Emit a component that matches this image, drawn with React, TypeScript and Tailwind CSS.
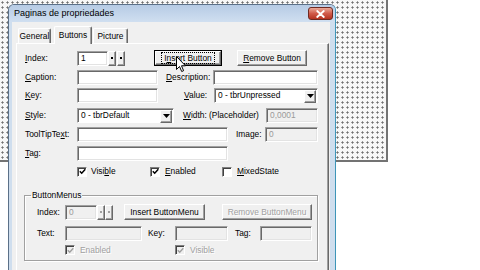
import React from "react";

type Kids = { children?: React.ReactNode };

const DIS = "text-[#a0a0a0] [text-shadow:1px_1px_0_#ffffff]";

function U({ children }: Kids) {
  return <span className="underline underline-offset-[1px] decoration-[0.8px]">{children}</span>;
}

function Label({ w, children, className = "" }: Kids & { w: string; className?: string }) {
  return <div className={`${w} shrink-0 whitespace-nowrap ${className}`}>{children}</div>;
}

function Field({ w, children, gray, dim }: Kids & { w: string; gray?: boolean; dim?: boolean }) {
  return (
    <div
      className={`${w} h-[15px] shrink-0 flex items-center pl-[3px] border border-t-[#a0a0a0] border-l-[#a0a0a0] border-b-white border-r-white shadow-[inset_1px_1px_0_#696969,inset_-1px_-1px_0_#e3e3e3] ${
        gray ? "bg-[#f0f0f0]" : "bg-white"
      } ${dim ? "text-[#9a9a9a]" : "text-black"}`}
    >
      {children}
    </div>
  );
}

function Select({ w, children }: Kids & { w: string }) {
  return (
    <div className={`${w} h-[15px] shrink-0 flex items-center border border-t-[#a0a0a0] border-l-[#a0a0a0] border-b-white border-r-white shadow-[inset_1px_1px_0_#696969] bg-white`}>
      <div className="flex-1 pl-[3px] whitespace-nowrap">{children}</div>
      <div className="w-[12px] h-[13px] mr-[1px] mt-[1px] flex items-center justify-center bg-[#f0f0f0] border border-t-white border-l-white border-b-[#696969] border-r-[#696969] shadow-[inset_-1px_-1px_0_#a0a0a0]">
        <svg width="7" height="4" viewBox="0 0 7 4">
          <path d="M0 0 H7 L3.5 4 Z" fill="#000" />
        </svg>
      </div>
    </div>
  );
}

function Btn({ w, children, focus, disabled }: Kids & { w: string; focus?: boolean; disabled?: boolean }) {
  return (
    <div className={`${w} h-[16px] shrink-0 bg-[#f0f0f0] ${focus ? "border border-black" : ""}`}>
      <div
        className={`w-full h-full flex items-center justify-center whitespace-nowrap border border-t-white border-l-white border-b-[#696969] border-r-[#696969] shadow-[inset_-1px_-1px_0_#a0a0a0] ${
          disabled ? DIS : ""
        }`}
      >
        {focus ? <span className="outline outline-1 outline-dotted outline-black px-[2px] py-[1px]">{children}</span> : children}
      </div>
    </div>
  );
}

function Spin({ dim }: { dim?: boolean }) {
  const c = dim ? "#a0a0a0" : "#000";
  return (
    <div className="w-[8px] h-[15px] shrink-0 flex items-center justify-center bg-[#f0f0f0] border border-t-white border-l-white border-b-[#696969] border-r-[#696969] shadow-[inset_-1px_-1px_0_#a0a0a0]">
      <div className="w-[2px] h-[2px]" style={{ background: c }} />
    </div>
  );
}

function Check({ checked, disabled }: { checked?: boolean; disabled?: boolean }) {
  return (
    <div
      className={`w-[10px] h-[10px] shrink-0 flex items-center justify-center border border-t-[#808080] border-l-[#808080] border-b-white border-r-white shadow-[inset_1px_1px_0_#404040] ${
        disabled ? "bg-[#f0f0f0]" : "bg-white"
      }`}
    >
      {checked && (
        <svg width="7" height="7" viewBox="0 0 7 7">
          <path d="M0.8 3.2 L2.7 5.2 L6.3 1.2" stroke={disabled ? "#a0a0a0" : "#000"} strokeWidth="1.5" fill="none" />
        </svg>
      )}
    </div>
  );
}

function Tab({ w, children, className = "" }: Kids & { w: string; className?: string }) {
  return (
    <div
      className={`${w} h-[15px] shrink-0 flex items-center justify-center bg-[#f0f0f0] border-t border-l border-r border-t-white border-l-white border-r-[#696969] rounded-t-[2px] shadow-[inset_-1px_0_0_#a0a0a0] ${className}`}
    >
      {children}
    </div>
  );
}

function Dialog() {
  return (
    <div className="absolute left-[8px] top-[4px] w-[328px] h-[290px] flex flex-col rounded-t-[6px] border border-[#5b7088] border-r-[#3d95b8] bg-[#cfdeee]">
      <div className="h-[17px] shrink-0 flex items-center justify-between pl-[5px] pr-[2px] rounded-t-[5px] bg-linear-to-b from-[#b6cbe5] to-[#d0dff0]">
        <span className="text-[9px] text-black">Paginas de propriedades</span>
        <div className="w-[25px] h-[13px] rounded-[3px] border border-[#6e2a22] bg-linear-to-b from-[#e9a898] via-[#d05a4a] to-[#b5321f] flex items-center justify-center">
          <svg width="9" height="8" viewBox="0 0 9 8">
            <path d="M1.2 1 L7.8 7 M7.8 1 L1.2 7" stroke="#fff" strokeWidth="1.8" strokeLinecap="round" />
          </svg>
        </div>
      </div>
      <div className="ml-[3px] mr-[5px] flex-1 bg-[#f0f0f0] pt-[4px] pl-[4px]">
        <div className="relative z-10 flex items-end h-[17px] pl-[2px]">
          <Tab w="w-[33px]">General</Tab>
          <div className="ml-[3px] w-[38px] h-[18px] -mb-[1px] shrink-0 flex items-center justify-center bg-[#f0f0f0] border-t border-l border-r border-t-white border-l-white border-r-[#696969] rounded-t-[2px] shadow-[inset_-1px_0_0_#a0a0a0]">
            Buttons
          </div>
          <Tab w="w-[35px]" className="ml-[1px]">
            Picture
          </Tab>
        </div>
        <div className="w-[313px] h-[260px] border border-t-white border-l-white border-b-[#696969] border-r-[#696969] shadow-[inset_-1px_-1px_0_#a0a0a0] pl-[8px] pt-[6px]">
          {/* Index row */}
          <div className="flex items-center h-[16px]">
            <Label w="w-[52px]">
              <U>I</U>ndex:
            </Label>
            <Field w="w-[31px]">1</Field>
            <Spin />
            <div className="ml-[1px]">
              <Spin />
            </div>
            <div className="ml-[29px]">
              <Btn w="w-[68px]" focus>
                I<U>n</U>sert Button
              </Btn>
            </div>
            <div className="ml-[15px]">
              <Btn w="w-[70px]">
                <U>R</U>emove Button
              </Btn>
            </div>
          </div>
          {/* Caption */}
          <div className="flex items-center h-[15px] mt-[4px]">
            <Label w="w-[52px]">
              <U>C</U>aption:
            </Label>
            <Field w="w-[81px]" />
            <Label w="w-[47px]" className="ml-[8px]">
              <U>D</U>escription:
            </Label>
            <Field w="w-[105px]" />
          </div>
          {/* Key */}
          <div className="flex items-center h-[15px] mt-[3px]">
            <Label w="w-[52px]">
              <U>K</U>ey:
            </Label>
            <Field w="w-[81px]" />
            <Label w="w-[30px]" className="ml-[26px]">
              <U>V</U>alue:
            </Label>
            <Select w="w-[104px]">0 - tbrUnpressed</Select>
          </div>
          {/* Style */}
          <div className="flex items-center h-[15px] mt-[5px]">
            <Label w="w-[52px]">
              <U>S</U>tyle:
            </Label>
            <Select w="w-[97px]">0 - tbrDefault</Select>
            <Label w="w-[83px]" className="ml-[9px]">
              <U>W</U>idth: (Placeholder)
            </Label>
            <Field w="w-[52px]" gray dim>
              0,0001
            </Field>
          </div>
          {/* ToolTipText */}
          <div className="flex items-center h-[15px] mt-[4px]">
            <Label w="w-[52px]">
              ToolTipTe<U>x</U>t:
            </Label>
            <Field w="w-[151px]" />
            <Label w="w-[29px]" className="ml-[8px]">
              Image:
            </Label>
            <Field w="w-[53px]" gray dim>
              0
            </Field>
          </div>
          {/* Tag */}
          <div className="flex items-center h-[15px] mt-[4px]">
            <Label w="w-[52px]">
              <U>T</U>ag:
            </Label>
            <Field w="w-[151px]" />
          </div>
          {/* checkboxes */}
          <div className="flex items-center h-[11px] mt-[5px]">
            <div className="w-[52px] shrink-0" />
            <div className="w-[73px] shrink-0 flex items-center">
              <Check checked />
              <span className="ml-[4px]">
                Visi<U>b</U>le
              </span>
            </div>
            <div className="w-[72px] shrink-0 flex items-center">
              <Check checked />
              <span className="ml-[5px]">
                <U>E</U>nabled
              </span>
            </div>
            <div className="flex items-center">
              <Check />
              <span className="ml-[5px]">
                <U>M</U>ixedState
              </span>
            </div>
          </div>
          {/* ButtonMenus group */}
          <fieldset className="mt-[13px] -ml-[1px] w-[294px] border border-[#a0a0a0] shadow-[inset_1px_1px_0_#ffffff,1px_1px_0_#ffffff]">
            <legend className="ml-[6px] px-[1px] h-[10px] leading-[10px]">ButtonMenus</legend>
            <div className="pl-[12px] pt-[4px] pb-[5px]">
              <div className="flex items-center h-[16px]">
                <Label w="w-[28px]">Index:</Label>
                <Field w="w-[32px]" gray dim>
                  0
                </Field>
                <Spin dim />
                <Spin dim />
                <div className="ml-[11px]">
                  <Btn w="w-[81px]">Insert ButtonMenu</Btn>
                </div>
                <div className="ml-[17px]">
                  <Btn w="w-[90px]" disabled>
                    Remove ButtonMenu
                  </Btn>
                </div>
              </div>
              <div className="flex items-center h-[15px] mt-[6px]">
                <Label w="w-[28px]">Text:</Label>
                <Field w="w-[77px]" gray />
                <Label w="w-[27px]" className="ml-[6px]">
                  Key:
                </Label>
                <Field w="w-[53px]" gray />
                <Label w="w-[25px]" className="ml-[7px]">
                  Tag:
                </Label>
                <Field w="w-[52px]" gray />
              </div>
              <div className="flex items-center h-[10px] mt-[4px]">
                <div className="w-[28px] shrink-0" />
                <div className="w-[110px] shrink-0 flex items-center">
                  <Check checked disabled />
                  <span className={`ml-[5px] ${DIS}`}>Enabled</span>
                </div>
                <div className="flex items-center">
                  <Check checked disabled />
                  <span className={`ml-[5px] ${DIS}`}>Visible</span>
                </div>
              </div>
            </div>
          </fieldset>
        </div>
      </div>
    </div>
  );
}

export default function App() {
  return (
    <div className="relative w-[480px] h-[270px] overflow-hidden bg-white font-['Liberation_Sans',Arial,sans-serif] text-[8.4px] leading-none text-black">
      <div className="w-[388px] h-[162px] border-r-2 border-b-2 border-[#737373] bg-[#f7f7f7] bg-[image:radial-gradient(circle,#6f6f6f_0.8px,transparent_1.4px)] bg-size-[5px_5px]" />
      <Dialog />
      <svg className="absolute left-[176px] top-[56px]" width="11" height="17" viewBox="0 0 11 17">
        <path d="M0.5 0.5 V13.5 L3.5 10.5 L5.7 15.5 L7.6 14.7 L5.5 9.8 H9.5 Z" fill="#fff" stroke="#000" strokeWidth="1" />
      </svg>
    </div>
  );
}
